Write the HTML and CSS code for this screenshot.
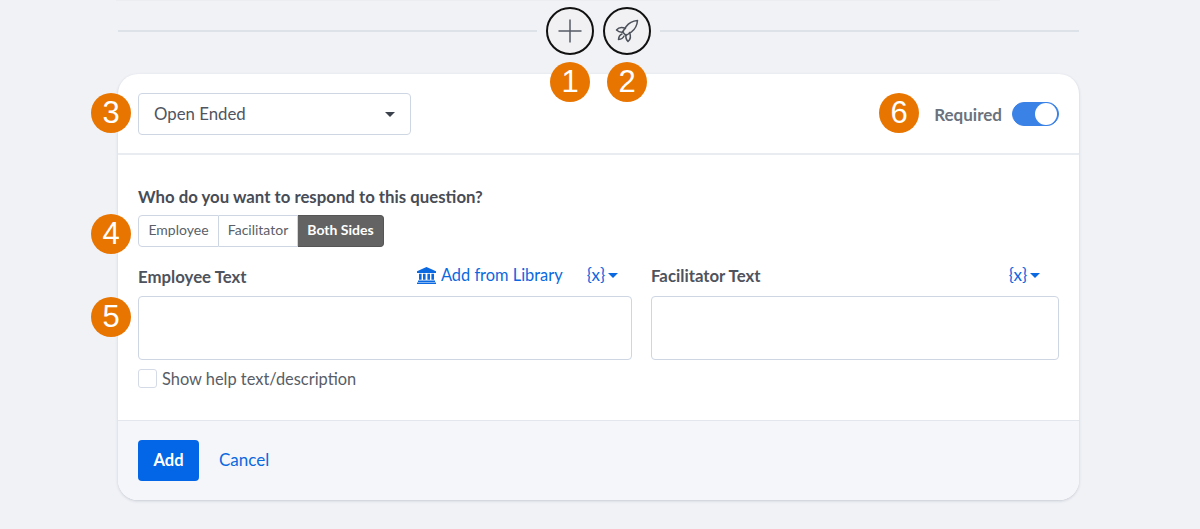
FILE: index.html
```html
<!DOCTYPE html>
<html lang="en">
<head>
<meta charset="utf-8">
<title>Question editor</title>
<link rel="stylesheet" href="styles.css">
</head>
<body>
<div class="top-sliver"></div>
<main class="page">
  <div class="divider-row">
    <span class="rule"></span>
    <button class="round-btn" type="button" aria-label="Add">
      <svg width="26" height="26" viewBox="0 0 26 26"><path d="M13 1.500v23M1.500 13h23" fill="none" stroke="#555b66" stroke-width="1.5"/></svg>
    </button>
    <button class="round-btn" type="button" aria-label="Launch">
      <svg width="24" height="24" viewBox="0 0 24 24" fill="none" stroke="#4c515b" stroke-width="1.5" stroke-linejoin="round" stroke-linecap="round">
        <path d="M22.500 1.500c-5 .4-8.800 2.500-11.300 6l-3.700 5.500 3.500 3.500 5.500-3.700c3.500-2.500 5.600-6.300 6-11.300z"/>
        <path d="M10.500 9.500C7 8 3.500 8.500 1.500 11c1.500 1.500 4 2.500 7 2"/>
        <path d="M14.500 13.500c1.500 3.500 1 7-1.500 9-1.500-1.500-2.500-4-2-7"/>
        <path d="M7 15c-2 .8-3.300 2.800-3.500 5.500C6.200 20.300 8.200 19 9 17"/>
      </svg>
    </button>
    <span class="rule"></span>
  </div>

  <section class="card">
    <header class="card-head">
      <div class="select"><span class="select-text">Open Ended</span><span class="caret caret-dark"></span></div>
      <div class="required">
        <span>Required</span>
        <span class="toggle"><span class="knob"></span></span>
      </div>
    </header>

    <div class="card-body">
      <p class="question">Who do you want to respond to this question?</p>
      <div class="seg">
        <button class="seg-btn" type="button">Employee</button>
        <button class="seg-btn" type="button">Facilitator</button>
        <button class="seg-btn seg-active" type="button">Both Sides</button>
      </div>
      <div class="fields">
        <div class="field field-main">
          <div class="field-head">
            <span class="field-label field-label-low">Employee Text</span>
            <a class="lib-link">
              <svg width="19" height="17" viewBox="0 0 19 17" fill="#0a68e0"><path d="M9.500 0 19 4.200V6H0V4.200z"/><path d="M2 6.800h2.600v6H2zM6 6.800h2.600v6H6zM10.400 6.800H13v6h-2.600zM14.400 6.800H17v6h-2.600zM1 13.500h17V15H1zM0 15.500h19V17H0z"/></svg>
              Add from Library
            </a>
            <span class="var">{x}<span class="caret caret-blue"></span></span>
          </div>
          <div class="text-box"></div>
        </div>
        <div class="field field-side">
          <div class="field-head">
            <span class="field-label">Facilitator Text</span>
            <span class="var">{x}<span class="caret caret-blue"></span></span>
          </div>
          <div class="text-box"></div>
        </div>
      </div>
      <label class="check"><span class="check-box"></span>Show help text/description</label>
    </div>

    <footer class="card-foot">
      <button class="add-btn" type="button">Add</button>
      <a class="cancel">Cancel</a>
    </footer>
  </section>

  <span class="badge b1">1</span>
  <span class="badge b2">2</span>
  <span class="badge b3">3</span>
  <span class="badge b4">4</span>
  <span class="badge b5">5</span>
  <span class="badge b6">6</span>
</main>
</body>
</html>
```
FILE: styles.css
```css
* { box-sizing: border-box; }
html, body { margin: 0; height: 100%; overflow: hidden; }
body {
  background: #f0f2f6;
  font-family: "Lato", "Open Sans", sans-serif;
  color: #4a4f59;
}
.top-sliver {
  position: absolute;
  left: 116px;
  top: 0;
  width: 884px;
  height: 1px;
  background: #ebedf1;
}
.page {
  position: relative;
  width: 961px;
  margin-left: 118px;
  padding-top: 7px;
}
.divider-row {
  display: flex;
  align-items: center;
  height: 48px;
  margin-bottom: 19px;
}
.rule {
  flex: 1;
  height: 2px;
  background: #dde1e8;
}
.round-btn {
  width: 48px;
  height: 48px;
  margin-left: 9px;
  padding: 0;
  display: flex;
  align-items: center;
  justify-content: center;
  border: 2.500px solid #111;
  border-radius: 50%;
  background: #f1f1f3;
}
.round-btn + .round-btn { margin-left: 9px; margin-right: 9px; }
.card {
  height: 426px;
  display: flex;
  flex-direction: column;
  background: #fff;
  border-radius: 20px;
  box-shadow: 0 1px 3px rgba(60, 70, 90, .22);
  overflow: hidden;
}
.card-head {
  height: 81px;
  flex: none;
  display: flex;
  align-items: center;
  justify-content: space-between;
  padding: 1px 20px 0 20px;
  border-bottom: 2px solid #e9ecf1;
}
.select {
  width: 273px;
  height: 42px;
  display: flex;
  align-items: center;
  justify-content: space-between;
  padding: 0 15px;
  border: 1.500px solid #cdd6e2;
  border-radius: 4px;
  font-size: 16.800px;
  color: #50555f;
}
.select-text { margin-bottom: 2px; }
.caret {
  display: inline-block;
  width: 0;
  height: 0;
  border-left: 5.500px solid transparent;
  border-right: 5.500px solid transparent;
  border-top: 5.500px solid #3c424c;
}
.caret-blue { border-top-color: #0a68e0; margin-left: 3px; vertical-align: 3px; }
.required {
  display: flex;
  align-items: center;
  gap: 10px;
  font-size: 17px;
  font-weight: 700;
  color: #6b727d;
}
.toggle {
  width: 47px;
  height: 24px;
  display: flex;
  justify-content: flex-end;
  align-items: center;
  padding-right: 1px;
  border-radius: 12px;
  background: #3b82e6;
  border: 1px solid #3b82e6;
}
.knob {
  width: 22px;
  height: 22px;
  border-radius: 50%;
  background: #fff;
}
.card-body {
  flex: 1;
  padding: 32px 20px 0 20px;
}
.question {
  margin: 0 0 8px;
  font-size: 16.800px;
  line-height: 20px;
  font-weight: 700;
  color: #474c56;
}
.seg {
  display: inline-flex;
  height: 32px;
  vertical-align: top;
}
.seg-btn {
  padding: 0 0 3px;
  font: 400 14px "Lato", sans-serif;
  color: #5a5f68;
  background: #fff;
  border: 1.500px solid #cdd6e2;
  border-left-width: 0;
  width: 79px;
}
.seg-btn:first-child {
  width: 81px;
  border-left-width: 1.500px;
  border-radius: 4px 0 0 4px;
}
.seg-active {
  width: 86px;
  color: #fff;
  font-weight: 700;
  background: #636363;
  border-color: #555;
  border-radius: 0 4px 4px 0;
}
.fields {
  display: flex;
  gap: 19px;
  margin-top: 11px;
}
.field-main { width: 494px; }
.field-side { flex: 1; }
.field-head {
  height: 38px;
  display: flex;
  align-items: flex-start;
  padding-top: 8px;
  font-size: 16.800px;
}
.field-label {
  font-weight: 700;
  color: #4e535d;
  line-height: 20px;
}
.field-label-low { margin-top: 1px; }
.lib-link {
  margin-left: auto;
  display: flex;
  align-items: center;
  gap: 5px;
  font-size: 16.400px;
  line-height: 18px;
  color: #0a68e0;
}
.var {
  margin-left: 24px;
  margin-right: 14px;
  line-height: 18px;
  font-size: 17px;
  color: #0a68e0;
  white-space: nowrap;
}
.field-side .var { margin-left: auto; margin-right: 19px; }
.text-box {
  height: 64px;
  border: 1.500px solid #cdd6e2;
  border-radius: 4px;
  background: #fff;
}
.check {
  display: flex;
  align-items: center;
  gap: 5px;
  margin-top: 8px;
  height: 20px;
  font-size: 16.400px;
  line-height: 17px;
  color: #585d66;
}
.check-box {
  width: 19px;
  height: 19px;
  border: 1.500px solid #d5dbe6;
  border-radius: 3px;
  background: #fff;
}
.card-foot {
  height: 80px;
  flex: none;
  display: flex;
  align-items: center;
  gap: 20px;
  padding: 0 20px;
  background: #f5f6f9;
  border-top: 1px solid #e3e6ec;
}
.add-btn {
  width: 61px;
  height: 41px;
  padding: 0 0 2px;
  border: 0;
  border-radius: 4px;
  background: #0366e6;
  color: #fff;
  font: 700 16.500px "Lato", sans-serif;
}
.cancel { font-size: 17px; line-height: 20px; padding-bottom: 1px; color: #0a68e0; }
.badge {
  position: absolute;
  width: 40px;
  height: 40px;
  border-radius: 50%;
  background: #e87500;
  color: #fff;
  font: 400 31px/40px "Liberation Sans", Arial, sans-serif;
  text-align: center;
}
.b1 { left: 432px; top: 62px; }
.b2 { left: 489px; top: 62px; }
.b3 { left: -27px; top: 93px; }
.b4 { left: -27px; top: 214px; }
.b5 { left: -27px; top: 297px; }
.b6 { left: 761px; top: 93px; }
```
